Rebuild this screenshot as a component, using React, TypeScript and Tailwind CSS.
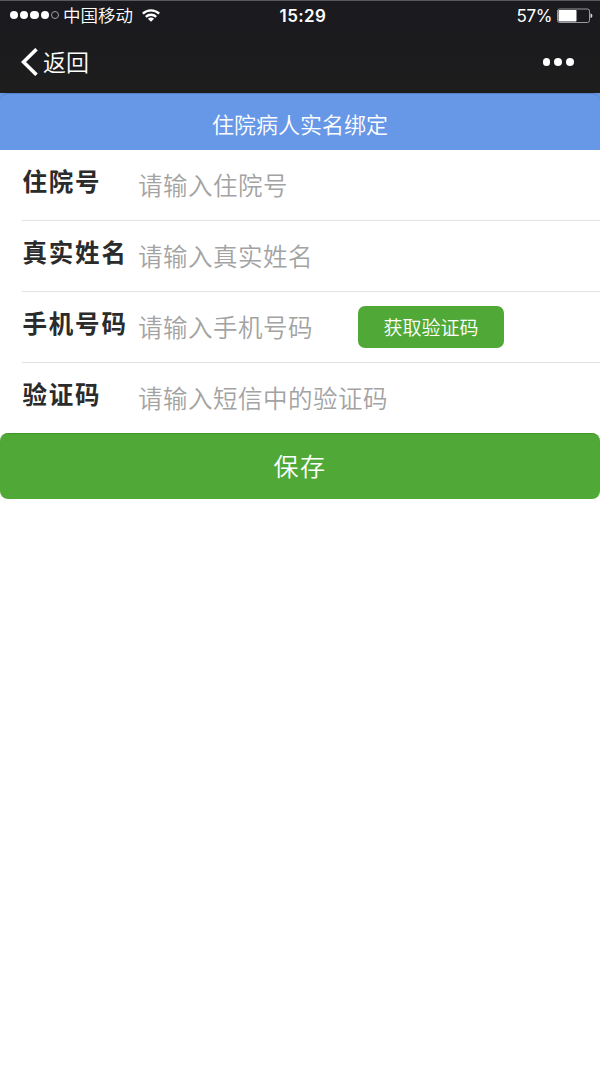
import { clsx } from "clsx";

type Field = {
  name: string;
  label: string;
  placeholder: string;
  withCode?: boolean;
};

const fields: Field[] = [
  { name: "admissionNo", label: "住院号", placeholder: "请输入住院号" },
  { name: "realName", label: "真实姓名", placeholder: "请输入真实姓名" },
  { name: "phone", label: "手机号码", placeholder: "请输入手机号码", withCode: true },
  { name: "code", label: "验证码", placeholder: "请输入短信中的验证码" },
];

function SignalDots() {
  return (
    <div className="mt-[-2px] flex gap-[2px]">
      {[0, 1, 2, 3, 4].map((i) => (
        <span
          key={i}
          className={clsx("size-[8.2px] rounded-full", i < 4 ? "bg-white" : "border border-[#a0a0a3]")}
        />
      ))}
    </div>
  );
}

function WifiIcon() {
  return (
    <svg className="mt-[-2px] ml-[9px] h-[13px] w-[18px]" viewBox="0 0 18 13" fill="none" stroke="#fff" strokeWidth="2.3">
      <path d="M0.8 4.7C5.5 0.2 12.5 0.2 17.2 4.7" />
      <path d="M3.8 7.9C6.8 5 11.2 5 14.2 7.9" />
      <path d="M9 12.8L5.9 9.8C7.6 8.2 10.4 8.2 12.1 9.8Z" fill="#fff" stroke="none" />
    </svg>
  );
}

function BatteryIcon() {
  return (
    <svg className="mt-[-1px] ml-[5px] h-4 w-9" viewBox="0 0 36 16">
      <rect x="0.5" y="1" width="32" height="13.5" rx="2" fill="none" stroke="#9b9b9e" />
      <rect x="1.5" y="2" width="18" height="11.5" rx="0.8" fill="#fff" />
      <path d="M33.5 5.5C36 6 36 9.5 33.5 10Z" fill="#d5d5d6" />
    </svg>
  );
}

function StatusBar() {
  return (
    <div className="grid h-[30px] grid-cols-3 items-center pr-[7px] pl-[10px] text-[17.5px] leading-none">
      <div className="flex items-center">
        <SignalDots />
        <span className="mt-[-2px] ml-1 whitespace-nowrap">中国移动</span>
        <WifiIcon />
      </div>
      <span className="pl-[3px] text-center font-[Inter] text-[17px] font-semibold tracking-[0.4px]">15:29</span>
      <div className="flex items-center justify-end">
        <span className="font-[Inter] text-[17px] font-normal tracking-[-0.4px]">57%</span>
        <BatteryIcon />
      </div>
    </div>
  );
}

function NavBar() {
  return (
    <div className="flex h-[62px] items-center justify-between pr-[26px] pl-[21px]">
      <button className="flex items-center text-[23px] leading-none">
        <svg className="h-7 w-[17px]" viewBox="0 0 17 28" fill="none" stroke="#fff" strokeWidth="3.6">
          <path d="M15.5 1.2L2.5 14L15.5 26.8" />
        </svg>
        <span className="mt-[-1px] ml-[5px]">返回</span>
      </button>
      <div className="flex gap-1">
        <span className="size-[7.8px] rounded-full bg-white" />
        <span className="size-[7.8px] rounded-full bg-white" />
        <span className="size-[7.8px] rounded-full bg-white" />
      </div>
    </div>
  );
}

function FieldRow({ field, last }: { field: Field; last: boolean }) {
  return (
    <div className={clsx("ml-[22px] flex", last ? "h-[70px]" : "h-[71px] border-b border-[#e2e2e2]")}>
      <label
        htmlFor={field.name}
        className="w-[116px] shrink-0 pt-[13px] pl-[0.5px] text-[24.5px] leading-9 font-bold tracking-[1.8px] text-[#2b2b2b]"
      >
        {field.label}
      </label>
      <input
        id={field.name}
        placeholder={field.placeholder}
        className={clsx(
          "mt-[17px] h-9 text-[24.5px] leading-9 font-[350] tracking-[0.5px] outline-none placeholder:text-[#a3a3a3]",
          field.withCode ? "w-[220px]" : "w-[400px]",
        )}
      />
      {field.withCode && (
        <button className="mt-[14px] h-[42px] w-[146px] rounded-[7px] bg-[#50a936] text-[19px] text-white">
          获取验证码
        </button>
      )}
    </div>
  );
}

export default function App() {
  return (
    <div className="min-h-[1066px] bg-white font-['Noto_Sans_CJK_SC',sans-serif] font-[350]">
      <header className="h-[93px] border-t border-[#59595c] bg-linear-to-b from-[#1a1a1f] to-[#1d1d1d] text-white">
        <StatusBar />
        <NavBar />
      </header>

      <div className="bg-[#6798e8]">
        <h1 className="flex h-[57px] items-center justify-center rounded-t-lg border-t border-[#5680c6] pt-[2px] text-[22px] font-[350] text-white">
          住院病人实名绑定
        </h1>
      </div>

      <form onSubmit={(e) => e.preventDefault()}>
        {fields.map((field, i) => (
          <FieldRow key={field.name} field={field} last={i === fields.length - 1} />
        ))}
        <button className="h-[66px] w-full rounded-lg border-t border-[#3f9526] bg-[#50a936] pb-px text-[25px] tracking-[1.5px] text-white">
          保存
        </button>
      </form>
    </div>
  );
}
